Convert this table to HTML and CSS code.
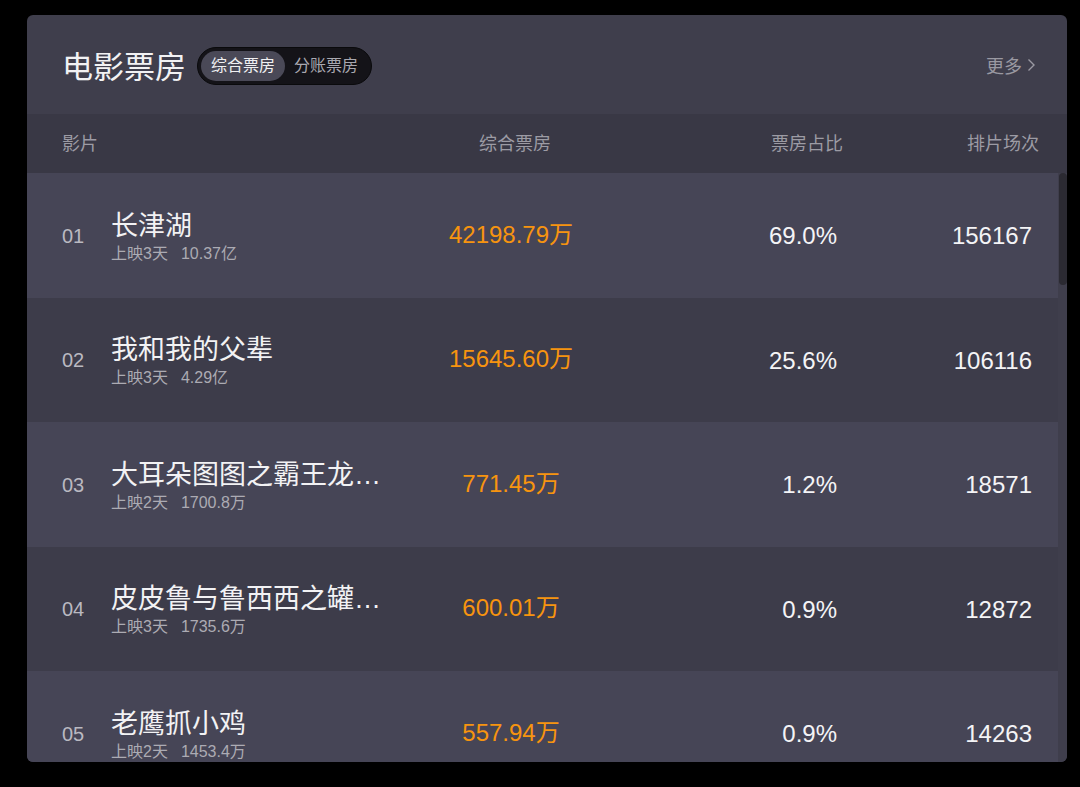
FILE: index.html
```html
<!DOCTYPE html>
<html lang="zh-CN">
<head>
  <meta charset="UTF-8">
  <meta name="viewport" content="width=device-width, initial-scale=1.0">
  <title>电影票房</title>
  <link rel="stylesheet" href="styles.css">
</head>
<body>
  <div class="panel">
    <!-- 标题栏 -->
    <div class="panel-head">
      <h1>电影票房</h1>
      <div class="switch">
        <span class="switch-item active">综合票房</span>
        <span class="switch-item">分账票房</span>
      </div>
      <a class="more" href="#">更多<svg width="9" height="14" viewBox="0 0 9 14"><path d="M1.5 1.5 L7 7 L1.5 12.5" fill="none" stroke="#9a99a2" stroke-width="1.4"/></svg></a>
    </div>

    <!-- 表头 -->
    <div class="table-head">
      <span class="th-film">影片</span>
      <span class="th-box">综合票房</span>
      <span class="th-rate">票房占比</span>
      <span class="th-show">排片场次</span>
    </div>

    <!-- 列表 -->
    <div class="table-body">
      <div class="rows">
        <div class="row">
          <span class="rank">01</span>
          <div class="film">
            <div class="name">长津湖</div>
            <div class="sub">上映3天<b>10.37亿</b></div>
          </div>
          <span class="box">42198.79万</span>
          <span class="rate">69.0%</span>
          <span class="show">156167</span>
        </div>
        <div class="row">
          <span class="rank">02</span>
          <div class="film">
            <div class="name">我和我的父辈</div>
            <div class="sub">上映3天<b>4.29亿</b></div>
          </div>
          <span class="box">15645.60万</span>
          <span class="rate">25.6%</span>
          <span class="show">106116</span>
        </div>
        <div class="row">
          <span class="rank">03</span>
          <div class="film">
            <div class="name">大耳朵图图之霸王龙在行动</div>
            <div class="sub">上映2天<b>1700.8万</b></div>
          </div>
          <span class="box">771.45万</span>
          <span class="rate">1.2%</span>
          <span class="show">18571</span>
        </div>
        <div class="row">
          <span class="rank">04</span>
          <div class="film">
            <div class="name">皮皮鲁与鲁西西之罐头小人</div>
            <div class="sub">上映3天<b>1735.6万</b></div>
          </div>
          <span class="box">600.01万</span>
          <span class="rate">0.9%</span>
          <span class="show">12872</span>
        </div>
        <div class="row">
          <span class="rank">05</span>
          <div class="film">
            <div class="name">老鹰抓小鸡</div>
            <div class="sub">上映2天<b>1453.4万</b></div>
          </div>
          <span class="box">557.94万</span>
          <span class="rate">0.9%</span>
          <span class="show">14263</span>
        </div>
      </div>
      <div class="scrollbar"><div class="thumb"></div></div>
    </div>
  </div>
</body>
</html>
```

FILE: styles.css
```css
body {
  margin: 0;
  padding: 15px 0 0 27px;
  background: #000;
  font-family: "Liberation Sans", "Noto Sans CJK SC", sans-serif;
}
.panel {
  width: 1040px;
  height: 747px;
  background: #3f3e4c;
  border-radius: 6px;
  overflow: hidden;
  display: flex;
  flex-direction: column;
}
.panel-head {
  height: 99px;
  flex: none;
  display: flex;
  align-items: center;
  padding: 0 31px 0 35px;
}
.panel-head h1 {
  margin: 0 11px 0 0;
  font-size: 31px;
  font-weight: normal;
  color: #f2f2f4;
}
.switch {
  display: flex;
  align-items: center;
  height: 38px;
  box-sizing: border-box;
  padding: 3px;
  background: #141318;
  border: 1px solid #0a0a0c;
  border-radius: 19px;
  margin-top: 2px;
}
.switch-item {
  font-size: 16px;
  color: #a9a8b0;
  padding: 0 10px 0 8px;
  line-height: 30px;
  border-radius: 15px;
}
.switch-item.active {
  background: #4a4957;
  color: #f0f0f2;
  padding: 0 10px;
  margin-right: 1px;
}
.more {
  margin-left: auto;
  display: flex;
  align-items: center;
  gap: 5px;
  font-size: 18px;
  color: #9a99a2;
  text-decoration: none;
}
.table-head {
  height: 59px;
  flex: none;
  display: flex;
  align-items: center;
  padding: 0 28px 4px 35px;
  box-sizing: border-box;
  background: #393845;
  font-size: 18px;
  color: #9c9ba4;
}
.th-film {
  width: 329px;
}
.th-box {
  width: 248px;
  text-align: center;
}
.th-rate {
  width: 204px;
  text-align: right;
}
.th-show {
  width: 196px;
  text-align: right;
}
.table-body {
  flex: 1;
  display: flex;
  overflow: hidden;
}
.rows {
  flex: 1;
}
.row {
  height: 124.5px;
  display: flex;
  align-items: center;
  padding: 0 26px 0 35px;
  background: #464556;
}
.row:nth-child(even) {
  background: #3d3c4a;
}
.rank {
  width: 49px;
  flex: none;
  font-size: 20px;
  color: #bab9c1;
  margin-top: 2px;
}
.film {
  width: 280px;
  flex: none;
}
.name {
  font-size: 27px;
  line-height: 38px;
  color: #f2f2f4;
  white-space: nowrap;
  overflow: hidden;
  text-overflow: ellipsis;
}
.sub {
  font-size: 16px;
  line-height: 20px;
  color: #acabb3;
  margin-top: -1px;
}
.sub b {
  font-weight: normal;
  margin-left: 13px;
}
.box {
  width: 240px;
  flex: none;
  text-align: center;
  font-size: 24px;
  color: #f7940f;
  margin-bottom: 6px;
}
.rate {
  width: 206px;
  flex: none;
  text-align: right;
  font-size: 24px;
  color: #f4f4f6;
  margin-top: 2px;
}
.show {
  width: 195px;
  flex: none;
  text-align: right;
  font-size: 24px;
  color: #f4f4f6;
  margin-top: 2px;
}
.scrollbar {
  width: 9px;
  flex: none;
  background: #3f3e4c;
}
.thumb {
  width: 8px;
  height: 112px;
  margin-left: 1px;
  background: #2b2a32;
  border-radius: 4px;
}
```
